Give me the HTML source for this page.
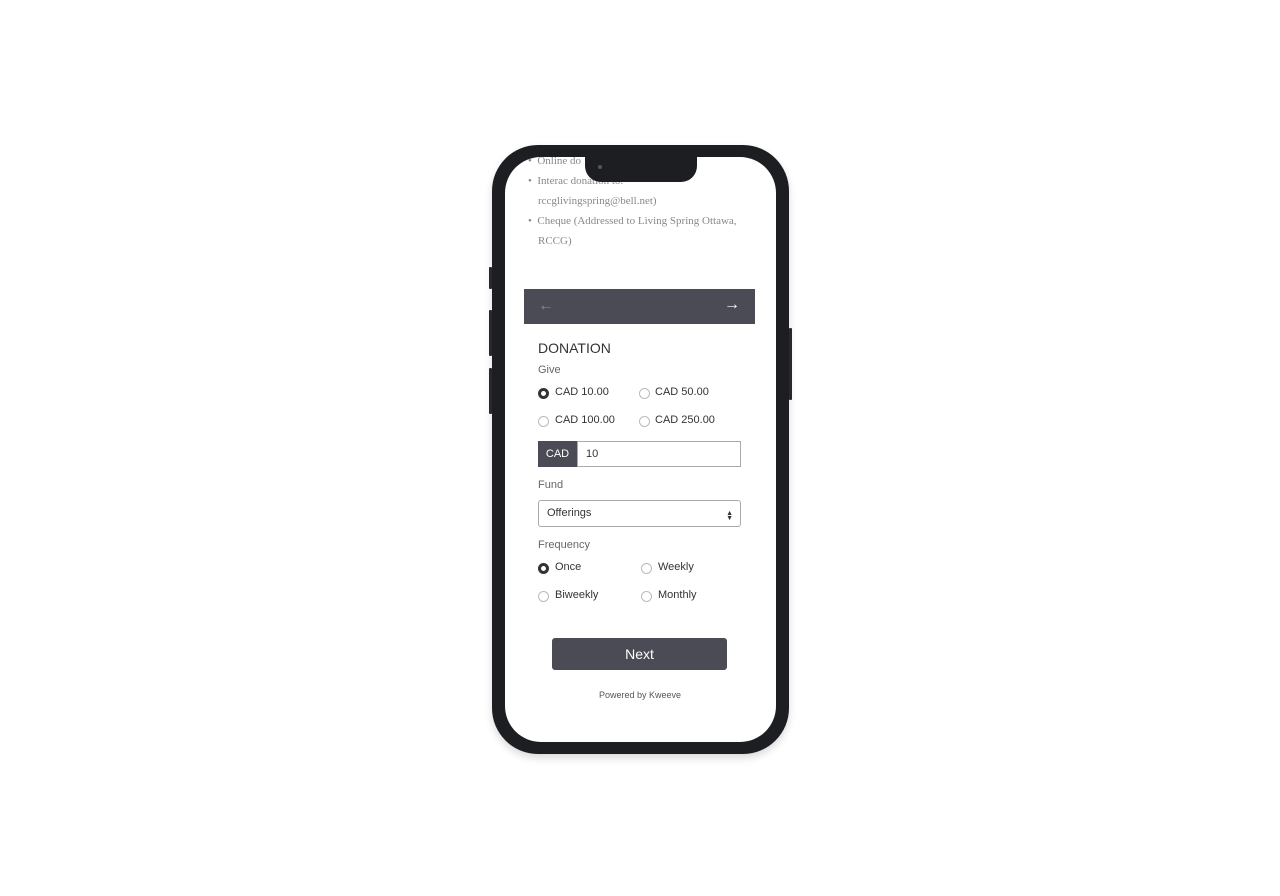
<!DOCTYPE html>
<html><head><style>
*{margin:0;padding:0;box-sizing:border-box}
body{width:1280px;height:896px;background:#fff;position:relative;overflow:hidden;font-family:"Liberation Sans",sans-serif}
.phone{position:absolute;left:492px;top:145px;width:297px;height:609px;background:#1d1e22;border-radius:46px;box-shadow:0 4px 8px rgba(0,0,0,.15)}
.screen{position:absolute;left:505px;top:157px;width:271px;height:585px;background:#fff;border-radius:36px;overflow:hidden}
.notch{position:absolute;left:585px;top:150px;width:112px;height:32px;background:#1d1e22;border-radius:0 0 16px 16px}
.btn{position:absolute;background:#2a2b30;width:3px;border-radius:1px}
.a{position:absolute;font-size:11px;color:#333}
.s{position:absolute;font-family:"Liberation Serif",serif;font-size:11px;color:#888}
.r{position:absolute;width:11px;height:11px;border:1px solid #bbb;border-radius:50%}
.r.on{border:3px solid #333}
.l{position:absolute;font-size:11px;color:#666}
</style></head><body>
<div class="btn" style="left:489px;top:267px;height:22px"></div>
<div class="btn" style="left:489px;top:310px;height:46px"></div>
<div class="btn" style="left:489px;top:368px;height:46px"></div>
<div class="btn" style="left:789px;top:328px;height:72px"></div>
<div class="phone"></div>
<div class="screen"></div>
<div class="s" style="left:528px;top:155px">•&nbsp;&nbsp;Online do</div>
<div class="s" style="left:528px;top:175px">•&nbsp;&nbsp;Interac donation to:</div>
<div class="s" style="left:538px;top:195px">rccglivingspring@bell.net)</div>
<div class="s" style="left:528px;top:215px">•&nbsp;&nbsp;Cheque (Addressed to Living Spring Ottawa,</div>
<div class="s" style="left:538px;top:235px">RCCG)</div>
<div class="notch"></div>
<div style="position:absolute;left:598px;top:165px;width:4px;height:4px;border-radius:50%;background:#555"></div>
<div style="position:absolute;left:524px;top:289px;width:231px;height:35px;background:#4a4b55"></div>
<div style="position:absolute;left:538px;top:297px;color:#888;font-size:16px">←</div>
<div style="position:absolute;left:724px;top:296px;color:#fff;font-size:16px">→</div>
<div class="a" style="left:538px;top:340px;font-size:14px;color:#333">DONATION</div>
<div class="l" style="left:538px;top:364px">Give</div>
<div class="r on" style="left:538px;top:388px"></div><div class="a" style="left:555px;top:386px">CAD 10.00</div>
<div class="r" style="left:639px;top:388px"></div><div class="a" style="left:655px;top:386px">CAD 50.00</div>
<div class="r" style="left:538px;top:416px"></div><div class="a" style="left:555px;top:414px">CAD 100.00</div>
<div class="r" style="left:639px;top:416px"></div><div class="a" style="left:655px;top:414px">CAD 250.00</div>
<div style="position:absolute;left:538px;top:441px;width:39px;height:26px;background:#4a4b55;color:#fff;font-size:11px;line-height:26px;text-align:center">CAD</div>
<div style="position:absolute;left:577px;top:441px;width:164px;height:26px;border:1px solid #aaa;font-size:11px;line-height:24px;padding-left:8px;color:#333">10</div>
<div class="l" style="left:538px;top:479px">Fund</div>
<div style="position:absolute;left:538px;top:500px;width:203px;height:27px;border:1px solid #aaa;border-radius:3px;font-size:11px;line-height:25px;padding-left:8px;color:#333">Offerings<span style="position:absolute;right:7px;top:0;font-size:7px">▲<br></span><span style="position:absolute;right:7px;top:5px;font-size:7px">▼</span></div>
<div class="l" style="left:538px;top:539px">Frequency</div>
<div class="r on" style="left:538px;top:563px"></div><div class="a" style="left:555px;top:561px">Once</div>
<div class="r" style="left:641px;top:563px"></div><div class="a" style="left:658px;top:561px">Weekly</div>
<div class="r" style="left:538px;top:591px"></div><div class="a" style="left:555px;top:589px">Biweekly</div>
<div class="r" style="left:641px;top:591px"></div><div class="a" style="left:658px;top:589px">Monthly</div>
<div style="position:absolute;left:552px;top:638px;width:175px;height:32px;background:#4a4b55;border-radius:3px;color:#fff;font-size:14px;line-height:32px;text-align:center">Next</div>
<div style="position:absolute;left:540px;top:690px;width:200px;text-align:center;font-size:9px;color:#555">Powered by Kweeve</div>
</body></html>
